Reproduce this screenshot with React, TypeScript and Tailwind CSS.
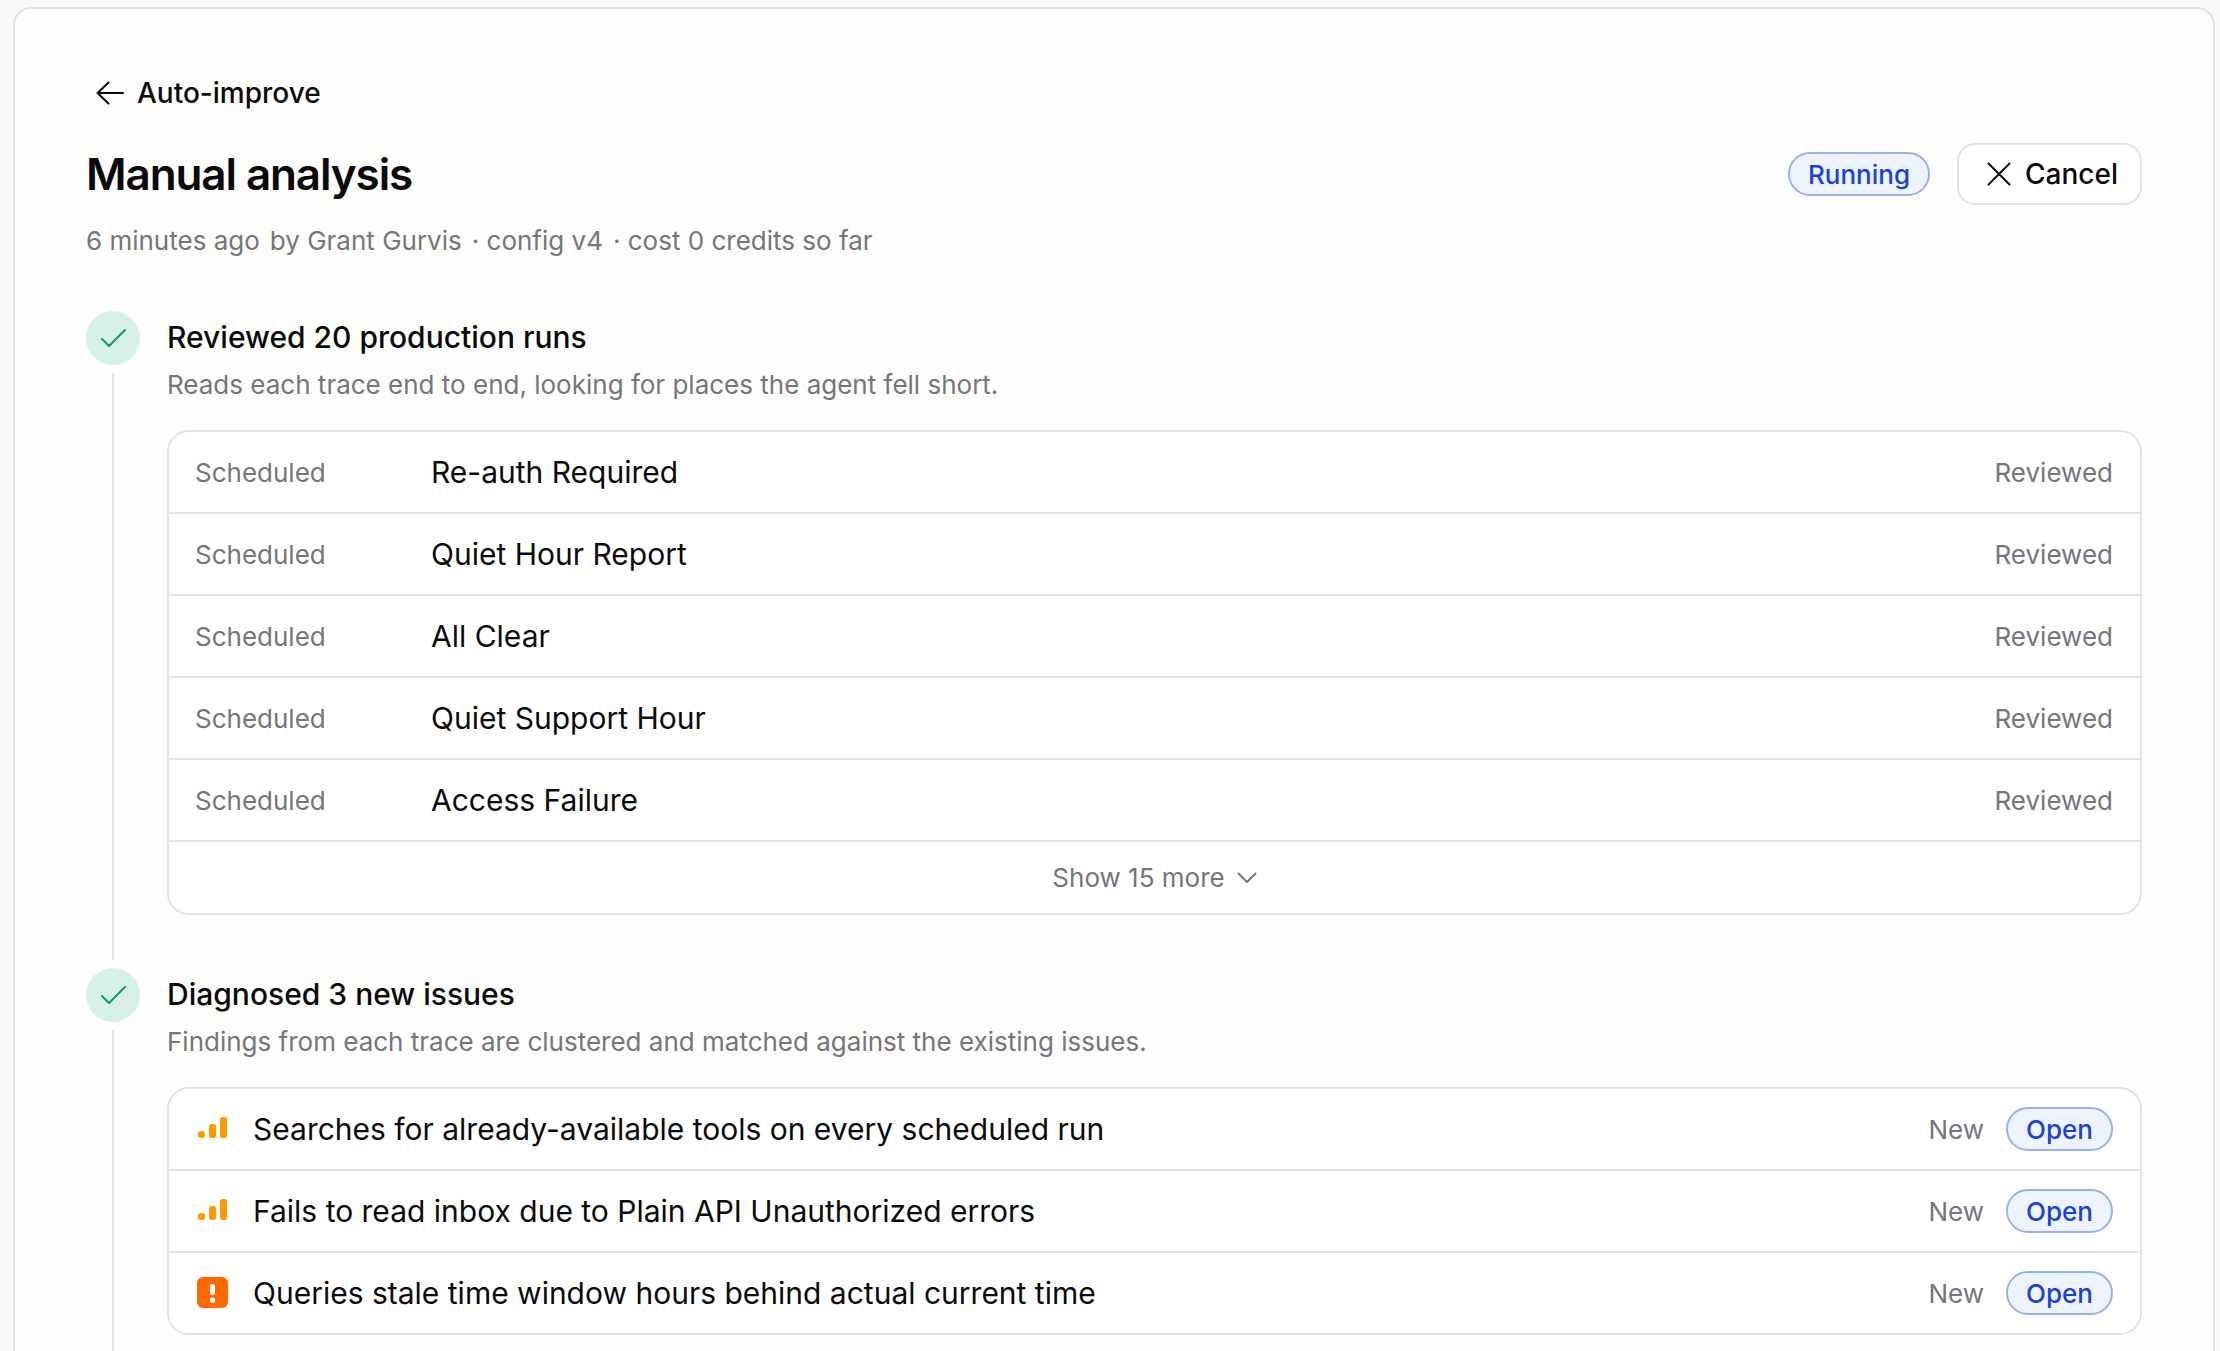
import type { ReactNode } from "react";

const runs = [
  { trigger: "Scheduled", title: "Re-auth Required", status: "Reviewed" },
  { trigger: "Scheduled", title: "Quiet Hour Report", status: "Reviewed" },
  { trigger: "Scheduled", title: "All Clear", status: "Reviewed" },
  { trigger: "Scheduled", title: "Quiet Support Hour", status: "Reviewed" },
  { trigger: "Scheduled", title: "Access Failure", status: "Reviewed" },
];

const issues = [
  {
    severity: "medium",
    title: "Searches for already-available tools on every scheduled run",
  },
  {
    severity: "medium",
    title: "Fails to read inbox due to Plain API Unauthorized errors",
  },
  {
    severity: "urgent",
    title: "Queries stale time window hours behind actual current time",
  },
];

function ArrowLeftIcon() {
  return (
    <svg width="28" height="24" viewBox="0 0 28 24" fill="none" stroke="currentColor" strokeWidth="2" strokeLinecap="round" strokeLinejoin="round" aria-hidden="true">
      <path d="M27 12H1.5M12.5 1.5L1.5 12L12.5 22.5" />
    </svg>
  );
}

function CloseIcon() {
  return (
    <svg width="24" height="24" viewBox="0 0 24 24" fill="none" stroke="currentColor" strokeWidth="2" strokeLinecap="round" aria-hidden="true">
      <path d="M1.5 1.5L22.5 22.5M22.5 1.5L1.5 22.5" />
    </svg>
  );
}

function CheckIcon() {
  return (
    <svg width="26" height="20" viewBox="0 0 26 20" fill="none" stroke="currentColor" strokeWidth="2" strokeLinecap="round" strokeLinejoin="round" aria-hidden="true">
      <path d="M2 11L9 18L25 2" />
    </svg>
  );
}

function ChevronDownIcon() {
  return (
    <svg width="20" height="12" viewBox="0 0 20 12" fill="none" stroke="currentColor" strokeWidth="2" strokeLinecap="round" strokeLinejoin="round" aria-hidden="true">
      <path d="M1.5 1.5L10 10L18.5 1.5" />
    </svg>
  );
}

function SeverityIcon({ severity }: { severity: string }) {
  if (severity === "urgent") {
    return (
      <svg width="32" height="32" viewBox="0 0 32 32" role="img" aria-label="Urgent">
        <rect width="31" height="31" rx="6" fill="#ff6900" />
        <rect x="13" y="7" width="5" height="11" rx="2.2" fill="#fff" />
        <circle cx="15.5" cy="23.2" r="2.6" fill="#fff" />
      </svg>
    );
  }

  return (
    <svg width="32" height="32" viewBox="0 0 32 32" fill="#fe9a00" role="img" aria-label="Medium">
      <rect x="1" y="18" width="7" height="7" rx="3" />
      <rect x="12" y="11" width="7" height="14" rx="2.5" />
      <rect x="23" y="4" width="7" height="21" rx="2.5" />
    </svg>
  );
}

function Badge({ children }: { children: ReactNode }) {
  return (
    <span className="inline-flex h-11 items-center rounded-full border-2 border-[#9ab0ec] bg-[#eef4fe] px-[18px] text-[26px] font-medium text-[#1a42d6]">
      {children}
    </span>
  );
}

function Step({
  title,
  description,
  children,
}: {
  title: string;
  description: string;
  children: ReactNode;
}) {
  return (
    <li className="flex gap-[27px]">
      {/* Marker and connecting line */}
      <div className="flex w-[54px] shrink-0 flex-col items-center">
        <span className="flex size-[54px] items-center justify-center rounded-full bg-[#d6f2e7] text-[#109868]">
          <CheckIcon />
        </span>
        <span className="my-2 w-[2px] flex-1 bg-[#e3e3e3]" />
      </div>

      <div className="min-w-0 flex-1 pt-[6px] pb-[53px]">
        <h2 className="text-[30px] leading-10 font-medium">{title}</h2>
        <p className="mt-[10px] text-[26px] leading-9 text-[#75757c]">
          {description}
        </p>
        <div className="mt-[27px] overflow-hidden rounded-[22px] border-2 border-[#e3e3e3] bg-white">
          {children}
        </div>
      </div>
    </li>
  );
}

export default function App() {
  return (
    <div className="flex h-screen overflow-hidden bg-[#f9f9f7] pt-[7px] pr-[5px] pl-[13px] font-['Inter','Liberation_Sans',sans-serif] text-[#0a0a0a]">
      <main className="min-w-0 flex-1 rounded-t-[18px] border-2 border-b-0 border-[#e3e3e3] bg-[#fdfdfb] px-[71px] pt-16">
        <a href="#auto-improve" className="ml-[10px] inline-flex items-center gap-[13px] text-[28px] leading-10 font-medium">
          <ArrowLeftIcon />
          Auto-improve
        </a>

        <header>
          <div className="mt-[30px] flex items-center justify-between">
            <h1 className="text-[44px] leading-[62px] font-semibold tracking-tight">
              Manual analysis
            </h1>
            <div className="flex items-center gap-[27px]">
              <Badge>Running</Badge>
              <button type="button" className="flex h-[62px] items-center gap-[14px] rounded-[18px] border-2 border-[#e3e3e3] bg-white pr-[22px] pl-7 text-[28px] font-medium">
                <CloseIcon />
                Cancel
              </button>
            </div>
          </div>
          <p className="mt-[18px] flex gap-[10px] text-[26px] leading-9 text-[#75757c]">
            <span>6 minutes ago</span>
            <span>by Grant Gurvis</span>
            <span>· config v4</span>
            <span>· cost 0 credits so far</span>
          </p>
        </header>

        <ol className="mt-[52px]">
          <Step
            title="Reviewed 20 production runs"
            description="Reads each trace end to end, looking for places the agent fell short."
          >
            <table className="w-full border-separate border-spacing-0 text-left">
              <tbody>
                {runs.map((run) => (
                  <tr key={run.title} className="h-[82px]">
                    <td className="w-[262px] border-b-2 border-[#e3e3e3] pl-[26px] text-[26px] text-[#75757c]">
                      {run.trigger}
                    </td>
                    <td className="border-b-2 border-[#e3e3e3] text-[30px]">
                      {run.title}
                    </td>
                    <td className="border-b-2 border-[#e3e3e3] pr-[27px] text-right text-[26px] text-[#75757c]">
                      {run.status}
                    </td>
                  </tr>
                ))}
              </tbody>
            </table>
            <button type="button" className="flex h-[71px] w-full items-center justify-center gap-3 text-[26px] text-[#75757c]">
              Show 15 more
              <ChevronDownIcon />
            </button>
          </Step>

          <Step
            title="Diagnosed 3 new issues"
            description="Findings from each trace are clustered and matched against the existing issues."
          >
            <ul className="divide-y-2 divide-[#e3e3e3]">
              {issues.map((issue) => (
                <li key={issue.title} className="flex h-[82px] items-center pr-[27px] pl-7 last:h-20">
                  <SeverityIcon severity={issue.severity} />
                  <span className="ml-6 flex-1 text-[30px]">{issue.title}</span>
                  <span className="mr-[22px] text-[26px] text-[#75757c]">
                    New
                  </span>
                  <Badge>Open</Badge>
                </li>
              ))}
            </ul>
          </Step>
        </ol>
      </main>
    </div>
  );
}
